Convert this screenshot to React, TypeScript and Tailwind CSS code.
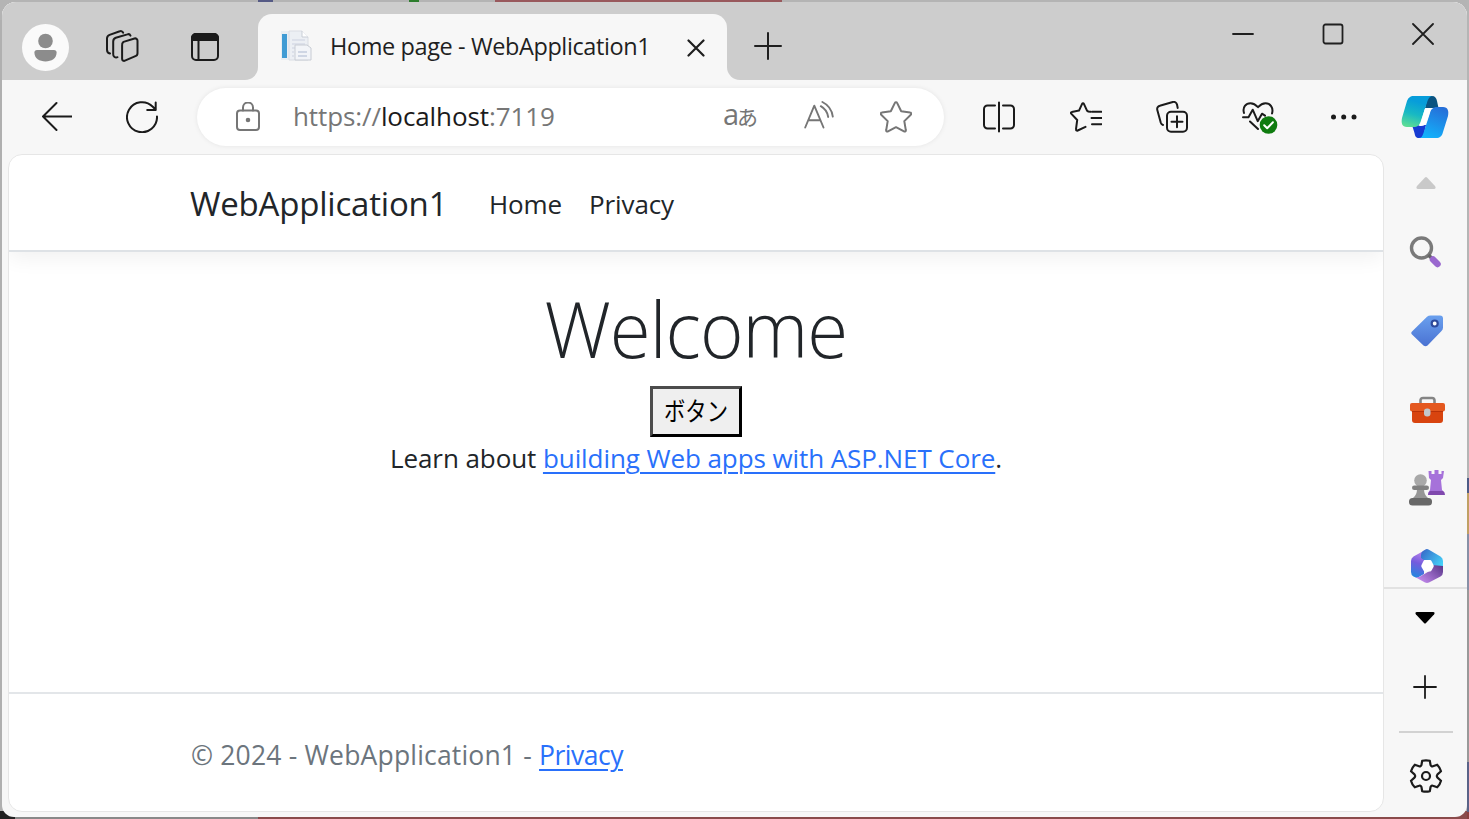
import type { ReactNode } from "react";
import { useId } from "react";

interface SlotProps {
	label: string;
	className?: string;
	children: ReactNode;
}

function IconButton({ label, className = "", children }: SlotProps) {
	return (
		<button
			type="button"
			aria-label={label}
			className={`grid shrink-0 place-items-center ${className}`}
		>
			{children}
		</button>
	);
}

function Stroke({
	width = 32,
	height = 32,
	weight = 2,
	children,
}: {
	width?: number;
	height?: number;
	weight?: number;
	children: ReactNode;
}) {
	return (
		<svg
			width={width}
			height={height}
			viewBox={`0 0 ${width} ${height}`}
			fill="none"
			stroke="currentColor"
			strokeWidth={weight}
			strokeLinecap="round"
			strokeLinejoin="round"
			aria-hidden="true"
		>
			{children}
		</svg>
	);
}

function ProfileIcon() {
	return (
		<svg width="47" height="47" viewBox="0 0 47 47" aria-hidden="true">
			<circle cx="23.5" cy="23.5" r="23.5" fill="#fafafa" />
			<circle cx="23.5" cy="17" r="7.3" fill="#8c8c8c" />
			<path
				d="M15 26h17a2.6 2.6 0 0 1 2.6 2.6C34.600 34.500 29.500 37.500 23.500 37.500S12.400 34.500 12.400 28.600A2.600 2.600 0 0 1 15 26z"
				fill="#8c8c8c"
			/>
		</svg>
	);
}

function WorkspacesIcon() {
	return (
		<Stroke width={34} height={34}>
			<path d="M18.500 11.900l11-3.400a2.300 2.300 0 0 1 3 2.200v12.500a3 3 0 0 1-2.100 2.900l-10.500 4.600a2 2 0 0 1-2.800-1.800V15.300a3.600 3.600 0 0 1 1.400-3.400z" />
			<path d="M12.500 27.200a3 3 0 0 1-4.300-3V11.500a4 4 0 0 1 2.600-3.700l11.600-3.400a2.400 2.400 0 0 1 3.100 1.200" />
			<path d="M5 23.500a4 4 0 0 1-3-3.900V8.600a4 4 0 0 1 2.600-3.700l10.200-3.600a2.500 2.500 0 0 1 3.300 1.400" />
		</Stroke>
	);
}

function TabPanelIcon() {
	return (
		<Stroke width={28} height={28}>
			<rect x="1" y="1" width="26" height="26" rx="4" />
			<path d="M1 7V5a4 4 0 0 1 4-4h18a4 4 0 0 1 4 4v2z" fill="currentColor" />
			<path d="M7.500 8v19" />
		</Stroke>
	);
}

function Favicon() {
	return (
		<svg width="32" height="32" viewBox="0 0 32 32" aria-hidden="true">
			<rect x="1" y="1" width="8" height="29" fill="#e8eef3" />
			<rect x="2" y="4" width="5" height="24" fill="#3f9bd4" />
			<path d="M9 1h13l6 6v23H9z" fill="#eceff4" stroke="#dadde4" />
			<path d="M22 1v6h6" fill="#fff" stroke="#c9ced6" />
			<path d="M12 10h13M12 14h13M12 18h3M12 22h2M12 26h2" stroke="#d6dce6" strokeWidth="1.500" />
			<path d="M15 15h12l4 3v12H15z" fill="#f2f4f8" stroke="#c8ccd4" />
			<path d="M18 22h9M18 26h9" stroke="#c3cbdd" strokeWidth="1.500" />
		</svg>
	);
}

function BackIcon() {
	return (
		<Stroke>
			<path d="M32 15.500H3M16.500 2L3 15.500 16.500 29" />
		</Stroke>
	);
}

function RefreshIcon() {
	return (
		<Stroke>
			<path d="M31 15.500a15 15 0 1 1-4.200-9.700l2.900 3M29.700 1.500v7.500h-8.500" />
		</Stroke>
	);
}

function LockIcon() {
	return (
		<Stroke width={26} height={30}>
			<rect x="2" y="8.500" width="22" height="19.500" rx="3" />
			<path d="M8 8.500v-3a5 5 0 0 1 10 0v3" />
			<circle cx="13" cy="18" r="1.300" fill="currentColor" />
		</Stroke>
	);
}

function ReadAloudIcon() {
	return (
		<Stroke weight={1.900}>
			<path d="M1.200 26.500L10.300 4.700 19.500 26.500M4.500 19.200h11.600" />
			<path d="M16.800 5.200a15 15 0 0 1 7.400 10.800M18.400 1A19 19 0 0 1 28.800 15.600" />
		</Stroke>
	);
}

function StarIcon() {
	return (
		<Stroke>
			<path d="M14.900 1.900a1.200 1.200 0 0 1 2.200 0l4.100 8.400 8.900 1.300a1.200 1.200 0 0 1 .7 2.100l-6.500 6.400 1.500 9a1.200 1.200 0 0 1-1.800 1.300L16 26.200l-8 4.200a1.200 1.200 0 0 1-1.800-1.300l1.500-9-6.500-6.400a1.200 1.200 0 0 1 .7-2.100l8.900-1.300z" />
		</Stroke>
	);
}

function SplitIcon() {
	return (
		<Stroke>
			<path d="M12 4.500H4.500A3.500 3.500 0 0 0 1 8v16a3.500 3.500 0 0 0 3.500 3.500H12M20 4.500h7.500A3.500 3.500 0 0 1 31 8v16a3.500 3.500 0 0 1-3.500 3.500H20M16 1.500v29" />
		</Stroke>
	);
}

function FavoritesIcon() {
	return (
		<Stroke>
			<path d="M22 10.800h9.500M21.500 17h10M22 23.200h9.500" />
			<path d="M20.500 10.800l-2.400-.4L17 9.600 13.900 2.900a1 1 0 0 0-1.800 0L9 9.600l-7.200 1.300a1 1 0 0 0-.6 1.700l6 6.400L6 28.200a1.200 1.200 0 0 0 1.700 1.300l7.800-3.600" />
		</Stroke>
	);
}

function CollectionsIcon() {
	return (
		<Stroke>
			<rect x="11" y="10.800" width="20" height="20" rx="4" />
			<path d="M21 15.300v11M15.500 20.800h11M7 24a3.500 3.500 0 0 1-2.200-2.300L1.300 9a3.500 3.500 0 0 1 2.500-4.300L16.800 1A3.500 3.500 0 0 1 21 3.500l.7 3.500" />
		</Stroke>
	);
}

function EssentialsIcon() {
	return (
		<Stroke width={36} height={34}>
			<path d="M2 13C.200 7 4 3.200 8.500 3.200c3.300 0 5.500 1.800 7.500 4 2-2.200 4.200-4 7.500-4 4.500 0 8.300 4.300 6.500 10.300M1 17.200h5.500l4.200-7.500 5 11.500 4.300-7.500 3 2M8 21.500l8 7.500" />
			<circle cx="26.500" cy="25" r="8.800" fill="#107c10" stroke="none" />
			<path d="M22.200 25.300l3 3 5.700-6" stroke="#fff" />
		</Stroke>
	);
}

function CopilotIcon() {
	const id = useId();

	return (
		<svg width="48" height="42" viewBox="0 0 48 42" aria-hidden="true">
			<defs>
				<linearGradient id={`${id}-l`} x1="0.600" y1="0" x2="0.300" y2="1">
					<stop offset="0.200" stopColor="#079dda" />
					<stop offset="0.600" stopColor="#18b9c3" />
					<stop offset="1" stopColor="#5bdc96" />
				</linearGradient>
				<linearGradient id={`${id}-r`} x1="0.700" y1="0" x2="0.300" y2="1">
					<stop offset="0" stopColor="#266fd8" />
					<stop offset="1" stopColor="#12b3fc" />
				</linearGradient>
			</defs>
			<path d="M27 0h4c3 0 4.500 2 5 5l1.500 7H24z" fill="#0a5381" />
			<path d="M11 29h14l-3 13h-4c-3 0-4-2-4.500-5z" fill="#173bd2" />
			<path
				d="M13 0h19c-3 0-4.500 2-5.500 5l-7 21c-1 3-3 5-7 5H6c-5 0-6-4-5-9L6 5c1.200-3 3-5 7-5z"
				fill={`url(#${id}-l)`}
			/>
			<path
				d="M36 11h6c5 0 6 4 5 9l-5 16c-1 4-3 6-7 6H17.500c3 0 4-2 5-5l6.500-20c1-4 3-6 7-6z"
				fill={`url(#${id}-r)`}
			/>
			<path d="M25.500 12h7c-2 .5-3 2-3.700 4.500l-3 9c-1 3-2.800 4.500-5.800 4.500h-3.500c2 0 2.800-2 3.500-4.300l3-10c.5-2 1-3.700 2.500-3.700z" fill="#fff" />
		</svg>
	);
}

function SearchIcon() {
	return (
		<svg width="33" height="33" viewBox="0 0 33 33" fill="none" aria-hidden="true">
			<circle cx="12.500" cy="12" r="10" stroke="#7a7a7a" strokeWidth="3.400" />
			<path d="M19.500 19l4 4" stroke="#666" strokeWidth="3.500" />
			<path d="M24 23.500l4.500 4.500" stroke="#9a68cf" strokeWidth="6.500" strokeLinecap="round" />
		</svg>
	);
}

function TagIcon() {
	const id = useId();

	return (
		<svg width="32" height="32" viewBox="0 0 32 32" aria-hidden="true">
			<defs>
				<linearGradient id={id} x1="0" y1="0" x2="0" y2="1">
					<stop offset="0" stopColor="#6aa0ee" />
					<stop offset="1" stopColor="#4a72d2" />
				</linearGradient>
			</defs>
			<path
				d="M16 1.800Q17.500.5 19.500.5H29Q32 .5 32 3.500v9q0 2-1.500 3.500L16.500 30.500q-2 1.500-4 0L1 19.500q-1.500-1.500 0-3z"
				fill={`url(#${id})`}
			/>
			<circle cx="23.700" cy="8.500" r="3" fill="#fff" stroke="#2d4a9c" strokeWidth="2.200" />
		</svg>
	);
}

function ToolboxIcon() {
	return (
		<svg width="35" height="28" viewBox="0 0 35 28" aria-hidden="true">
			<path d="M10.500 8V4.500Q10.500 2 13 2h9q2.500 0 2.500 2.500V8" fill="none" stroke="#858585" strokeWidth="2.600" />
			<path d="M2 14h31v10q0 3-3 3H5q-3 0-3-3z" fill="#d8440f" />
			<rect y="7" width="35" height="8.500" rx="2" fill="#e4581f" />
			<path d="M2 15.500h31" stroke="#b93209" />
			<rect x="14" y="12.500" width="6.500" height="8" rx="3" fill="#c3c6ca" />
		</svg>
	);
}

function GamesIcon() {
	return (
		<svg width="36" height="36" viewBox="0 0 36 36" aria-hidden="true">
			<path d="M19.500 1h3v3h3V0h4v4h3V1H35l-1 7-2 2 1 10q2 1 2 5H19q0-3 2-5l1-10-2-2z" fill="#a672da" />
			<path d="M19 25q0-3 2-4h13q2 1 2 4z" fill="#8049ae" />
			<circle cx="11.500" cy="10.500" r="6.300" fill="#a8a8a8" />
			<path d="M8 19h7q0 6 4 9H4q4-3 4-9z" fill="#969696" />
			<rect x="3" y="15.500" width="17" height="4.500" rx="2.200" fill="#808080" />
			<rect y="28" width="23" height="7.500" rx="3.500" fill="#686868" />
		</svg>
	);
}

function MicrosoftIcon() {
	const id = useId();

	return (
		<svg width="32" height="34" viewBox="0 0 32 34" aria-hidden="true">
			<defs>
				<linearGradient id={`${id}-a`} x1="0.600" y1="0" x2="0.400" y2="1">
					<stop offset="0" stopColor="#c58aed" />
					<stop offset="0.500" stopColor="#745bdd" />
					<stop offset="1" stopColor="#2386df" />
				</linearGradient>
				<linearGradient id={`${id}-b`} x1="0" y1="0" x2="1" y2="0.700">
					<stop offset="0" stopColor="#3564c6" />
					<stop offset="1" stopColor="#45d4fa" />
				</linearGradient>
				<linearGradient id={`${id}-c`} x1="1" y1="0" x2="0" y2="0.700">
					<stop offset="0" stopColor="#583588" />
					<stop offset="1" stopColor="#c48bee" />
				</linearGradient>
			</defs>
			<path d="M16 0L2.500 7.500Q0 9 0 12v11q0 3 2.500 4.500L6 29l7-4V10l3-3z" fill={`url(#${id}-a)`} />
			<path d="M12 2l2.500-1.500q1.500-.8 3 0L29.500 7.500Q32 9 32 12v10l-12-6-10-7V6q0-3 2-4z" fill={`url(#${id}-b)`} />
			<path d="M32 17v6q0 3-2.500 4.500L18 33.500q-2 .8-4 0L4 28q3 1 6-1l11-6.500V16z" fill={`url(#${id}-c)`} />
			<path d="M14 11h5q1 0 1.500 1l2 4q.5 1 0 2l-2 3.500q-.5 1-1.500 1h-5q-1 0-1.500-1l-2-3.500q-.5-1 0-2l2-4q.5-1 1.500-1z" fill="#fff" />
		</svg>
	);
}

function GearIcon() {
	return (
		<Stroke width={34} height={34} weight={2.200}>
			<path d="M13.200 1.800q3.800-1 7.600 0l.8 4.400q.7 1.700 2.300 1l4.300-1.500q2.800 2.800 3.800 6.600l-3.500 3.100q-1.300 1.600 0 3.200l3.500 3.100q-1 3.800-3.800 6.600l-4.300-1.500q-1.600-.7-2.300 1l-.8 4.400q-3.800 1-7.600 0l-.8-4.400q-.7-1.700-2.300-1l-4.300 1.500Q3 25.500 2 21.700l3.500-3.100q1.300-1.600 0-3.200L2 12.300q1-3.800 3.800-6.600l4.300 1.500q1.600.7 2.300-1z" />
			<circle cx="17" cy="17" r="4" />
		</Stroke>
	);
}

function TitleBar() {
	return (
		<div className="flex h-[78px] shrink-0 bg-[#f7f7f7]">
			<div className="flex w-[256px] shrink-0 items-center rounded-br-[13px] bg-[#cdcdcd] pt-[12px] pl-5 text-[#1b1b1b]">
				<IconButton label="Profile">
					<ProfileIcon />
				</IconButton>
				<IconButton label="Workspaces" className="ml-[36px]">
					<WorkspacesIcon />
				</IconButton>
				<IconButton label="Tab actions menu" className="ml-[52px]">
					<TabPanelIcon />
				</IconButton>
			</div>

			<div className="w-[469px] shrink-0 bg-[#cdcdcd] pt-[12px]">
				<div className="flex h-full items-center rounded-t-[14px] bg-[#f7f7f7] pb-0.5 pl-[22px] text-[#1f1f1f]">
					<Favicon />
					<span className="ml-[18px] w-[319px] text-[23.5px] leading-[30px] tracking-[-0.4px] whitespace-nowrap">
						Home page - WebApplication1
					</span>
					<IconButton label="Close tab" className="mt-[3px] ml-[38px]">
						<Stroke width={18} height={18} weight={2.200}>
							<path d="M1.500 1.500l15 15M16.500 1.500l-15 15" />
						</Stroke>
					</IconButton>
				</div>
			</div>

			<div className="flex flex-1 justify-between rounded-bl-[13px] bg-[#cdcdcd] pr-[33px] pl-[27px] text-[#1f1f1f]">
				<IconButton label="New tab" className="pt-[10px]">
					<Stroke width={28} height={28}>
						<path d="M14 1v26M1 14h26" />
					</Stroke>
				</IconButton>
				<div className="flex h-[63px] items-center gap-[68px]">
					<IconButton label="Minimize">
						<Stroke width={22} height={22} weight={1.800}>
							<path d="M1 11h20" />
						</Stroke>
					</IconButton>
					<IconButton label="Maximize">
						<Stroke width={22} height={22} weight={1.800}>
							<rect x="1.500" y="1.500" width="19" height="19" rx="2" />
						</Stroke>
					</IconButton>
					<IconButton label="Close">
						<Stroke width={22} height={22} weight={1.800}>
							<path d="M1 1l20 20M21 1L1 21" />
						</Stroke>
					</IconButton>
				</div>
			</div>
		</div>
	);
}

function Toolbar() {
	return (
		<div className="flex h-[74px] shrink-0 items-center pl-[38px] text-[#1b1b1b]">
			<IconButton label="Back">
				<BackIcon />
			</IconButton>
			<IconButton label="Refresh" className="ml-[54px]">
				<RefreshIcon />
			</IconButton>

			<div className="ml-[39px] flex h-[58px] w-[747px] shrink-0 items-center rounded-full bg-white pl-[38px] text-[#767676] shadow-[0_0_5px_rgba(0,0,0,0.08)]">
				<LockIcon />
				<span className="ml-[32px] w-[430px] pb-0.5 text-[26px] tracking-[-0.1px] whitespace-nowrap">
					https://<span className="text-[#1b1b1b]">localhost</span>:7119
				</span>
				<span className="flex w-[34px] items-baseline pb-2 leading-none" aria-label="Translate">
					<span className="w-[14px] text-[29px]">a</span>
					<span className="text-[21px]">あ</span>
				</span>
				<IconButton label="Read aloud" className="ml-[47px]">
					<ReadAloudIcon />
				</IconButton>
				<IconButton label="Add to favorites" className="ml-[44px]">
					<StarIcon />
				</IconButton>
			</div>

			<IconButton label="Split screen" className="ml-[39px]">
				<SplitIcon />
			</IconButton>
			<IconButton label="Favorites" className="ml-[55px]">
				<FavoritesIcon />
			</IconButton>
			<IconButton label="Collections" className="ml-[54px]">
				<CollectionsIcon />
			</IconButton>
			<IconButton label="Browser essentials" className="ml-[54px]">
				<EssentialsIcon />
			</IconButton>
			<IconButton label="Settings and more" className="ml-[52px]">
				<svg width="28" height="6" viewBox="0 0 28 6" fill="currentColor" aria-hidden="true">
					<circle cx="3.500" cy="3" r="2.500" />
					<circle cx="13.700" cy="3" r="2.500" />
					<circle cx="24" cy="3" r="2.500" />
				</svg>
			</IconButton>
			<IconButton label="Copilot" className="ml-[43px]">
				<CopilotIcon />
			</IconButton>
		</div>
	);
}

function WebPage() {
	return (
		<div className="ml-[6px] flex h-[658px] w-[1376px] shrink-0 flex-col overflow-hidden rounded-[14px] border border-[#e6e6e6] bg-white text-[#212529]">
			<header className="flex h-[97px] shrink-0 items-center border-b-2 border-[#dee2e6] pt-0.5 pl-[181px] shadow-[0_6px_20px_rgba(0,0,0,0.06)]">
				<a className="w-[299px] text-[33px] tracking-[-0.2px] whitespace-nowrap">
					WebApplication1
				</a>
				<nav className="flex pt-px text-[26px] tracking-[-0.1px]">
					<a className="w-[100px]">Home</a>
					<a>Privacy</a>
				</nav>
			</header>

			<main className="flex flex-1 flex-col items-center pt-[37px]">
				<h1 className="h-[97px] scale-x-[0.953] text-[78px] leading-[78px] font-light tracking-[-1px]">
					Welcome
				</h1>
				<button
					type="button"
					className="grid h-[51px] w-[92px] shrink-0 place-items-center border-3 border-t-[#4c4c4c] border-r-black border-b-black border-l-[#4c4c4c] bg-[#efefef] pb-0.5 text-black"
				>
					<span className="scale-x-[0.82] text-[26px] leading-none whitespace-nowrap">
						ボタン
					</span>
				</button>
				<p className="text-[26px] leading-[42px] tracking-[-0.08px] whitespace-nowrap">
					Learn about{" "}
					<a className="text-[#2970fb] underline decoration-2 underline-offset-4">
						building Web apps with ASP.NET Core
					</a>
					.
				</p>
			</main>

			<footer className="flex h-[119px] shrink-0 items-center border-t-2 border-[#e3e6e9] pt-[6px] pl-[182px] text-[26.5px] tracking-[0.18px] whitespace-pre text-[#6c757d]">
				© 2024 - WebApplication1 -{" "}
				<a className="tracking-[-0.5px] text-[#2970fb] underline decoration-2 underline-offset-4">
					Privacy
				</a>
			</footer>
		</div>
	);
}

function Sidebar() {
	return (
		<aside className="flex flex-1 flex-col items-center text-[#1b1b1b]">
			<div className="flex h-[435px] w-full shrink-0 flex-col items-center overflow-hidden border-b-2 border-[#e2e2e2]">
				<IconButton label="Scroll up" className="h-[58px]">
					<svg width="20" height="14" viewBox="0 0 20 14" aria-hidden="true">
						<path d="M9 1.500q1-1 2 0l8 8.500q1.500 3-1 3H2q-2.500 0-1-3z" fill="#c9c9c9" />
					</svg>
				</IconButton>
				<IconButton label="Search" className="h-[80px]">
					<SearchIcon />
				</IconButton>
				<IconButton label="Shopping" className="h-[78px] pl-[3px]">
					<TagIcon />
				</IconButton>
				<IconButton label="Tools" className="h-[80px] pl-[3px]">
					<ToolboxIcon />
				</IconButton>
				<IconButton label="Games" className="h-[76px] pl-[3px]">
					<GamesIcon />
				</IconButton>
				<IconButton label="Microsoft 365" className="h-[80px] pl-[3px]">
					<MicrosoftIcon />
				</IconButton>
			</div>
			<IconButton label="Scroll down" className="h-[58px] pr-px">
				<svg width="20" height="14" viewBox="0 0 20 14" aria-hidden="true">
					<path d="M2 1h16q2.500 0 1 2.500L11 12q-1 1-2 0L1 3.500Q-.5 1 2 1z" />
				</svg>
			</IconButton>
			<IconButton label="Customize" className="h-[80px] pr-0.5">
				<Stroke width={24} height={24} weight={1.800}>
					<path d="M12 1v22M1 12h22" />
				</Stroke>
			</IconButton>
			<div className="mt-[4px] h-0.5 w-[54px] shrink-0 bg-[#d2d2d2]" />
			<IconButton label="Settings" className="mt-[26px]">
				<GearIcon />
			</IconButton>
		</aside>
	);
}

export default function App() {
	return (
		<div className="flex h-[819px] w-[1469px] overflow-hidden px-0.5 pt-0.5 pb-0.5 font-['Open_Sans','Noto_Sans_CJK_JP',sans-serif] [background:linear-gradient(#b5b5b5_0_478px,#4d5b86_478px_493px,#c0a064_493px_534px,#8790a6_534px_590px,#999_590px_762px,#5a6388_762px_812px,#8b4040_812px)_right/2px_100%_no-repeat,linear-gradient(90deg,#b4b4b4_0_258px,#555a85_258px_273px,#b4b4b4_273px_409px,#2d7d2d_409px_419px,#b4b4b4_419px_495px,#99595d_495px_782px,#b4b4b4_782px)_top/100%_20px_no-repeat,linear-gradient(90deg,#222_0_15px,#888_15px_258px,#8a4b4b_258px)_bottom/100%_8px_no-repeat,#b0b0b0]">
			<div className="flex flex-1 flex-col overflow-hidden rounded-t-[14px] rounded-b-[12px] bg-[#f7f7f7]">
				<TitleBar />
				<Toolbar />
				<div className="flex min-h-0 flex-1">
					<WebPage />
					<Sidebar />
				</div>
			</div>
		</div>
	);
}
